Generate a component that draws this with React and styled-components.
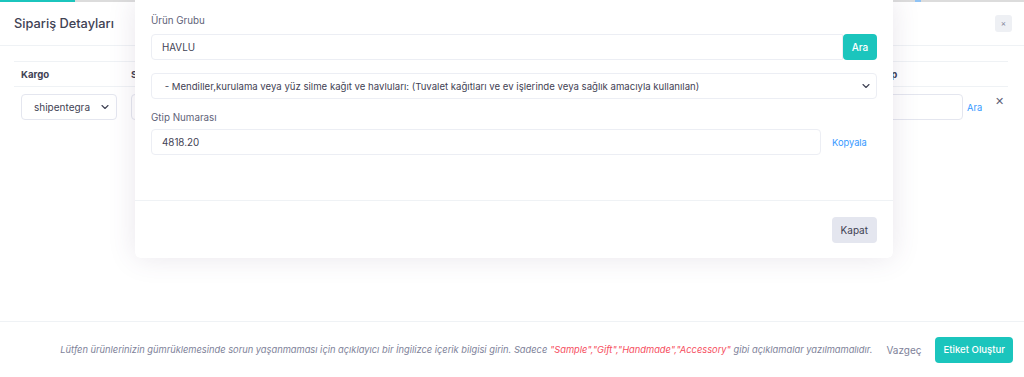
import React from 'react';
import styled, { createGlobalStyle } from 'styled-components';

const GlobalStyle = createGlobalStyle`
  html, body {
    margin: 0;
    padding: 0;
    background: #ffffff;
  }
  body {
    font-family: 'Inter', 'Noto Sans', sans-serif;
    color: #3f4254;
  }
  * { box-sizing: border-box; }
`;

const Page = styled.div`
  position: relative;
  width: 1024px;
  height: 377px;
  overflow: hidden;
  display: flex;
  flex-direction: column;
  background: #fff;
`;

const TopStrip = styled.div`
  display: flex;
  height: 2px;
  background: #dcdcdc;
`;

const Segment = styled.span`
  display: block;
  height: 2px;
  margin-left: ${p => p.offset}px;
  width: ${p => p.size}px;
  background: ${p => p.color};
`;

const Header = styled.div`
  display: flex;
  align-items: center;
  justify-content: space-between;
  height: 44px;
  padding: 0 12px 0 14px;
  border-bottom: 1px solid #eff2f5;
`;

const Title = styled.h3`
  margin: 0;
  font-size: 12.8px;
  font-weight: 500;
  color: #3f4254;
`;

const CloseBox = styled.button`
  width: 17px;
  height: 17px;
  border: 0;
  border-radius: 3px;
  background: #eef0f4;
  color: #7e8299;
  font-size: 8px;
  line-height: 17px;
  padding: 0;
  font-family: inherit;
`;

const Body = styled.div`
  flex: 1;
  padding: 15px 16px 0 14px;
`;

const Table = styled.div`
  border-top: 1px solid #eff2f5;
`;

const HeadRow = styled.div`
  display: grid;
  grid-template-columns: 110px 747px 1fr;
  align-items: center;
  height: 25px;
  padding-left: 7px;
  border-bottom: 1px solid #eff2f5;
`;

const HeadCell = styled.div`
  font-size: 9.6px;
  font-weight: 700;
  color: #3f4254;
`;

const BodyRow = styled.div`
  display: grid;
  grid-template-columns: 110px 747px 1fr;
  align-items: center;
  padding: 7px 0 0 7px;
`;

const SelectBox = styled.div`
  display: flex;
  align-items: center;
  justify-content: space-between;
  width: ${p => p.width || '100%'};
  height: 26px;
  padding: 0 5px 0 12px;
  border: 1px solid #e4e6ef;
  border-radius: 4px;
  background: #fff;
  font-size: 10px;
  color: #3f4254;
`;

const FieldBox = styled.div`
  height: 26px;
  width: ${p => p.width || '100%'};
  border: 1px solid #e4e6ef;
  border-radius: 4px;
  background: #fff;
`;

const GtipCell = styled.div`
  display: flex;
  align-items: center;
  gap: 4px;
`;

const LinkText = styled.a`
  font-size: 9.3px;
  color: #3699ff;
  text-decoration: none;
`;

const RemoveMark = styled.span`
  margin-left: auto;
  font-size: 11px;
  color: #5e6278;
  padding-right: 4px;
  transform: translateY(-6px);
`;

const Footer = styled.div`
  display: flex;
  align-items: center;
  justify-content: flex-end;
  gap: 14px;
  height: 56px;
  padding: 0 11px 0 0;
  border-top: 1px solid #eff2f5;
`;

const Note = styled.p`
  margin: 0;
  font-size: 9.3px;
  font-style: italic;
  color: #7e8299;
  white-space: nowrap;
`;

const Red = styled.span`
  color: #f64e60;
`;

const PlainButton = styled.button`
  border: 0;
  background: transparent;
  font-family: inherit;
  font-size: 10px;
  color: #7e8299;
  padding: 0;
`;

const SolidButton = styled.button`
  height: ${p => p.h || 26}px;
  padding: 0 ${p => p.px || 8}px;
  border: 0;
  border-radius: 4px;
  font-family: inherit;
  font-size: ${p => (p.tone === 'light' ? 10 : 9.6)}px;
  font-weight: ${p => (p.tone === 'light' ? 400 : 500)};
  color: ${p => (p.tone === 'light' ? '#3f4254' : '#fff')};
  background: ${p => (p.tone === 'light' ? '#e4e6ef' : '#1bc5bd')};
`;

const Modal = styled.div`
  position: absolute;
  left: 135px;
  top: 0;
  width: 758px;
  height: 258px;
  background: #fff;
  border-radius: 0 0 6px 6px;
  box-shadow: 0 0 28px 0 rgba(82, 63, 105, 0.13);
  display: flex;
  flex-direction: column;
`;

const ModalBody = styled.div`
  flex: 1;
  padding: 14px 16px 0 16px;
  border-bottom: 1px solid #eff2f5;
  display: flex;
  flex-direction: column;
`;

const Label = styled.label`
  display: block;
  font-size: 9.8px;
  color: #5e6278;
  margin: ${p => p.mt || 0}px 0 ${p => p.mb || 6}px;
  line-height: 14px;
`;

const InputGroup = styled.div`
  display: flex;
  align-items: stretch;
  height: 26px;
`;

const TextInput = styled.div`
  flex: 1;
  display: flex;
  align-items: center;
  padding: 0 10px;
  border: 1px solid #eceef4;
  border-radius: ${p => (p.joined ? '4px 0 0 4px' : '4px')};
  font-size: 9.8px;
  color: #3f4254;
`;

const AddonButton = styled.button`
  width: 34px;
  border: 0;
  border-radius: 4px;
  background: #1bc5bd;
  color: #fff;
  font-family: inherit;
  font-size: 10px;
  font-weight: 500;
  padding: 0;
`;

const WideSelect = styled(SelectBox)`
  margin-top: 13px;
  border-color: #eceef4;
  font-size: 9.6px;
  padding: 0 4px 0 10px;
`;

const CopyRow = styled.div`
  display: grid;
  grid-template-columns: 670px 1fr;
  align-items: stretch;
  height: 26px;
`;

const CopyLink = styled(LinkText)`
  align-self: center;
  padding-left: 11px;
`;

const ModalFooter = styled.div`
  display: flex;
  justify-content: flex-end;
  align-items: center;
  height: 57px;
  padding-right: 16px;
`;

const Chevron = ({ size = 12 }) => (
  <svg width={size} height={size} viewBox="0 0 24 24" fill="none" stroke="#3f4254" strokeWidth="2.2" strokeLinecap="round" strokeLinejoin="round">
    <path d="M6 9l6 6 6-6" />
  </svg>
);

export default function App() {
  return (
    <>
      <GlobalStyle />
      <Page>
        <TopStrip>
          <Segment offset={0} size={75} color="#1bc5bd" />
          <Segment offset={280} size={13} color="#f64e60" />
          <Segment offset={517} size={6} color="#8fc3f5" />
          <Segment offset={24} size={6} color="#8fc3f5" />
        </TopStrip>
        <Header>
          <Title>Sipariş Detayları</Title>
          <CloseBox>×</CloseBox>
        </Header>
        <Body>
          <Table>
            <HeadRow>
              <HeadCell>Kargo</HeadCell>
              <HeadCell>Servis</HeadCell>
              <HeadCell>Gtip</HeadCell>
            </HeadRow>
            <BodyRow>
              <SelectBox width="96px">
                shipentegra
                <Chevron />
              </SelectBox>
              <FieldBox width="200px" />
              <GtipCell>
                <FieldBox width="85px" />
                <LinkText href="#">Ara</LinkText>
                <RemoveMark>✕</RemoveMark>
              </GtipCell>
            </BodyRow>
          </Table>
        </Body>
        <Footer>
          <Note>
            Lütfen ürünlerinizin gümrüklemesinde sorun yaşanmaması için açıklayıcı bir İngilizce içerik bilgisi girin. Sadece{' '}
            <Red>"Sample","Gift","Handmade","Accessory"</Red> gibi açıklamalar yazılmamalıdır.
          </Note>
          <PlainButton>Vazgeç</PlainButton>
          <SolidButton>Etiket Oluştur</SolidButton>
        </Footer>

        <Modal>
          <ModalBody>
            <Label>Ürün Grubu</Label>
            <InputGroup>
              <TextInput joined>HAVLU</TextInput>
              <AddonButton>Ara</AddonButton>
            </InputGroup>
            <WideSelect>
              &nbsp;- Mendiller,kurulama veya yüz silme kağıt ve havluları: (Tuvalet kağıtları ve ev işlerinde veya sağlık amacıyla kullanılan)
              <Chevron />
            </WideSelect>
            <Label mt={12} mb={4}>Gtip Numarası</Label>
            <CopyRow>
              <TextInput>4818.20</TextInput>
              <CopyLink href="#">Kopyala</CopyLink>
            </CopyRow>
          </ModalBody>
          <ModalFooter>
            <SolidButton tone="light" px={9}>Kapat</SolidButton>
          </ModalFooter>
        </Modal>
      </Page>
    </>
  );
}
